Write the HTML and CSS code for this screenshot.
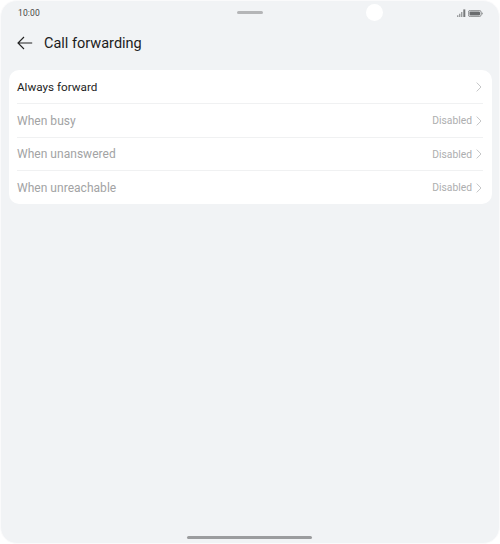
FILE: index.html
```html
<!DOCTYPE html>
<html lang="en">
<head>
<meta charset="utf-8">
<title>Call forwarding</title>
<link rel="stylesheet" href="styles.css">
</head>
<body>
<div class="device">
  <div class="handle"></div>
  <div class="camera"></div>
  <header class="status">
    <span class="time">10:00</span>
    <span class="status-icons">
      <svg class="signal" width="9" height="8" viewBox="0 0 9 8"><path d="M0 8h1.4V6.3H0zM2 8h1.4V4.8H2zM4 8h1.4V3H4z" fill="#9a9c9e"/><path d="M6.3 8h2V0.4h-2z" fill="#77797b"/></svg>
      <svg class="battery" width="15" height="7" viewBox="0 0 15 7"><rect x="0.4" y="0.4" width="12.7" height="6.2" rx="1.8" fill="none" stroke="#77797b" stroke-width="0.8"/><rect x="1.5" y="1.5" width="10.5" height="4" rx="0.9" fill="#6a6c6e"/><path d="M13.7 2.3c.7.2 1 .6 1 1.2s-.3 1-1 1.2z" fill="#77797b"/></svg>
    </span>
  </header>
  <div class="titlebar">
    <svg class="back" width="16" height="14" viewBox="0 0 16 14"><path d="M15.2 7H1.2M7 1L1 7l6 6" fill="none" stroke="#222" stroke-width="1.15"/></svg>
    <h1>Call forwarding</h1>
  </div>
  <section class="card">
    <div class="row"><span class="label">Always forward</span><span class="side"><svg class="chev" width="6" height="10" viewBox="0 0 6 10"><path d="M.7.6L5 5 .7 9.4" fill="none" stroke="#c6c7c8" stroke-width="1"/></svg></span></div>
    <div class="row off"><span class="label">When busy</span><span class="side"><span class="value">Disabled</span><svg class="chev" width="6" height="10" viewBox="0 0 6 10"><path d="M.7.6L5 5 .7 9.4" fill="none" stroke="#c6c7c8" stroke-width="1"/></svg></span></div>
    <div class="row off"><span class="label">When unanswered</span><span class="side"><span class="value">Disabled</span><svg class="chev" width="6" height="10" viewBox="0 0 6 10"><path d="M.7.6L5 5 .7 9.4" fill="none" stroke="#c6c7c8" stroke-width="1"/></svg></span></div>
    <div class="row off"><span class="label">When unreachable</span><span class="side"><span class="value">Disabled</span><svg class="chev" width="6" height="10" viewBox="0 0 6 10"><path d="M.7.6L5 5 .7 9.4" fill="none" stroke="#c6c7c8" stroke-width="1"/></svg></span></div>
  </section>
  <div class="homebar"></div>
</div>
</body>
</html>
```
FILE: styles.css
```css
html, body { margin: 0; padding: 0; background: #fff; }
body { width: 500px; height: 544px; overflow: hidden; font-family: Roboto, "Noto Sans", sans-serif; }
.device {
  position: relative;
  box-sizing: border-box;
  width: 500px;
  height: 544px;
  background: #f1f3f5;
  border-radius: 17px;
  border: 1px solid #fafafb;
  padding: 0 7.5px;
  display: flex;
  flex-direction: column;
}
.handle { position: absolute; top: 10px; left: 236px; width: 26px; height: 2.5px; border-radius: 2px; background: #b4b5b7; }
.camera { position: absolute; top: 3px; left: 365px; width: 17px; height: 17px; border-radius: 50%; background: #fff; }
.status { display: flex; justify-content: space-between; align-items: center; height: 24px; padding: 0 8.5px 0 9.5px; }
.time { font-size: 8.5px; color: #444; letter-spacing: .15px; }
.status-icons { display: flex; align-items: center; gap: 2px; }
.titlebar { display: flex; align-items: center; height: 36px; padding-left: 8.5px; gap: 11px; margin-bottom: 9px; }
.back { flex: none; }
h1 { margin: 0; font-size: 14.5px; font-weight: 400; color: #1c1c1c; }
.card { background: #fff; border-radius: 10px; padding: 0 8.5px; height: 134px; display: flex; flex-direction: column; }
.row { box-sizing: border-box; flex: 0 0 33.5px; display: flex; align-items: center; justify-content: space-between; border-top: 1px solid #f0f1f2; }
.row:first-child { flex-basis: 33px; border-top: 0; padding-top: 1px; }
.row.off { padding-top: 1px; }
.label { font-size: 11.7px; color: #1e1e1e; }
.off .label { font-size: 12px; letter-spacing: .03px; color: #a2a3a4; }
.side { display: flex; align-items: center; gap: 4px; }
.value { font-size: 10.3px; color: #adaeaf; }
.chev { margin-right: 1px; }
.homebar { position: absolute; left: 186px; top: 535px; width: 125px; height: 3px; border-radius: 2px; background: #9b9c9e; }
```
